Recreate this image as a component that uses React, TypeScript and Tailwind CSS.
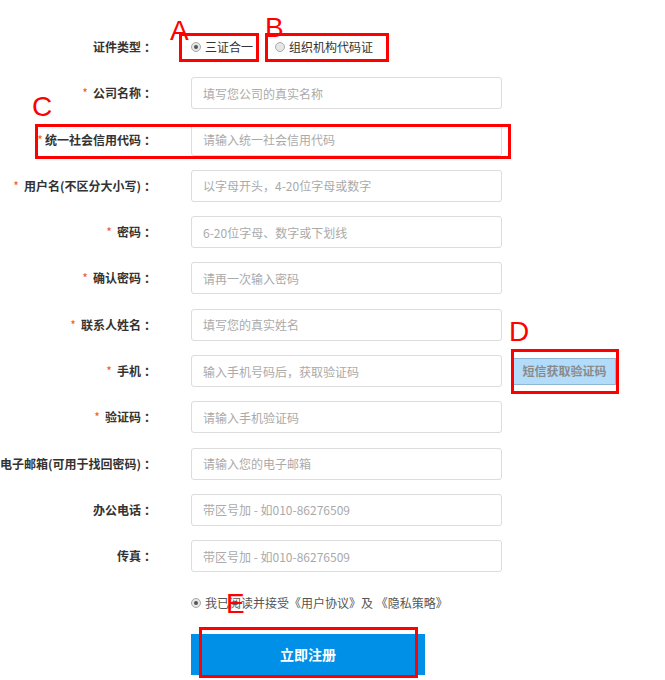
import React from 'react';

const FONT = '"Microsoft YaHei", "Noto Sans CJK SC", sans-serif';

const ROWS = [
  { label: '公司名称', req: true, ph: '填写您公司的真实名称' },
  { label: '统一社会信用代码', req: true, ph: '请输入统一社会信用代码', tight: true },
  { label: '用户名(不区分大小写)', req: true, ph: '以字母开头，4-20位字母或数字' },
  { label: '密码', req: true, ph: '6-20位字母、数字或下划线' },
  { label: '确认密码', req: true, ph: '请再一次输入密码' },
  { label: '联系人姓名', req: true, ph: '填写您的真实姓名' },
  { label: '手机', req: true, ph: '输入手机号码后，获取验证码', sms: true },
  { label: '验证码', req: true, ph: '请输入手机验证码' },
  { label: '电子邮箱(可用于找回密码)', req: false, ph: '请输入您的电子邮箱' },
  { label: '办公电话', req: false, ph: '带区号加 - 如010-86276509' },
  { label: '传真', req: false, ph: '带区号加 - 如010-86276509' },
];

const Radio = ({ checked }: { checked?: boolean }) => (
  <span className="w-[10px] h-[10px] rounded-full border border-[#a9a9a9] bg-[#e6e6e6] flex items-center justify-center shrink-0">
    {checked && <span className="w-[4px] h-[4px] rounded-full bg-[#555]" />}
  </span>
);

const Label = ({ text, req, tight }: { text: string; req?: boolean; tight?: boolean }) => (
  <div className="w-[156px] shrink-0 text-right text-[12px] font-bold text-[#333] whitespace-nowrap">
    {req && <span className={`text-[#f05a28] font-normal ${tight ? 'mr-[2px]' : 'mr-[5px]'}`}>*</span>}
    {text}
    <span className="ml-[3px]">：</span>
  </div>
);

const Box = ({ className }: { className: string }) => (
  <div className={`absolute border-[3px] border-[#ff0000] pointer-events-none ${className}`} />
);

const Mark = ({ ch, className }: { ch: string; className: string }) => (
  <div className={`absolute text-[28px] leading-none text-[#ff0000] pointer-events-none ${className}`} style={{ fontFamily: '"Liberation Sans", Arial, sans-serif' }}>
    {ch}
  </div>
);

export default function App() {
  return (
    <div className="relative w-[665px] h-[680px] bg-white overflow-hidden" style={{ fontFamily: FONT }}>
      <div className="flex flex-col pt-[31px] gap-[14.3px]">
        <div className="flex items-center h-[32px]">
          <Label text="证件类型" />
          <div className="ml-[35px] flex items-center gap-[4px] text-[12px] text-[#333]">
            <Radio checked />
            <span>三证合一</span>
          </div>
          <div className="ml-[22px] flex items-center gap-[4px] text-[12px] text-[#333]">
            <Radio />
            <span>组织机构代码证</span>
          </div>
        </div>

        {ROWS.map((r, i) => (
          <div key={i} className="flex items-center h-[32px]">
            <Label text={r.label} req={r.req} tight={r.tight} />
            <input
              className="ml-[35px] w-[311px] h-[32px] border border-[#dcdcdc] rounded-[3px] px-[11px] text-[12px] text-[#333] placeholder:text-[#aaa] outline-none"
              placeholder={r.ph}
            />
            {r.sms && (
              <button className="ml-[11px] w-[103px] h-[27px] bg-[#b3dcfa] border border-[#8db6d6] text-[12px] font-bold text-[#8a8a8a]">
                短信获取验证码
              </button>
            )}
          </div>
        ))}

        <div className="flex items-center h-[32px] pl-[191px] gap-[4px] text-[12px] text-[#555]">
          <Radio checked />
          <span>我已阅读并接受《用户协议》及 《隐私策略》</span>
        </div>
      </div>

      <div className="pl-[191px] mt-[15px]">
        <button className="w-[234px] h-[41px] bg-[#0090e8] text-white text-[14px] font-bold">立即注册</button>
      </div>

      <Box className="left-[179px] top-[33px] w-[80px] h-[29px]" />
      <Box className="left-[265px] top-[33px] w-[124px] h-[29px]" />
      <Box className="left-[35px] top-[124px] w-[476px] h-[35px]" />
      <Box className="left-[511px] top-[349px] w-[108px] h-[45px]" />
      <Box className="left-[199px] top-[627px] w-[219px] h-[51px]" />

      <Mark ch="A" className="left-[170px] top-[17px]" />
      <Mark ch="B" className="left-[265px] top-[14px]" />
      <Mark ch="C" className="left-[32px] top-[93px]" />
      <Mark ch="D" className="left-[509px] top-[318px]" />
      <Mark ch="E" className="left-[226px] top-[590px]" />
    </div>
  );
}
